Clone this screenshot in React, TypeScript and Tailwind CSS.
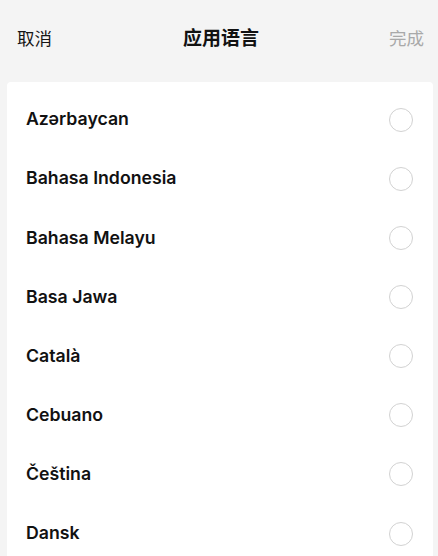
const languages = [
  "Azərbaycan",
  "Bahasa Indonesia",
  "Bahasa Melayu",
  "Basa Jawa",
  "Català",
  "Cebuano",
  "Čeština",
  "Dansk",
];

export default function App() {
  return (
    <div
      className="h-[556px] w-[438px] overflow-hidden bg-[#f4f4f4]"
      style={{ fontFamily: "Inter, 'Noto Sans CJK SC', sans-serif" }}
    >
      <header className="flex h-[79px] items-center justify-between pl-[17px] pr-[14px] pb-[1px]">
        <button type="button" className="text-[17.5px] text-[#161616]">
          取消
        </button>
        <h1 className="ml-[1px] text-[19px] font-bold text-[#111]">应用语言</h1>
        <button type="button" className="text-[17.5px] text-[#a9a9a9]">
          完成
        </button>
      </header>
      <div className="ml-[7px] mr-[5px] mt-[3px] rounded-[4px] bg-white pt-[8px]">
        {languages.map((lang) => (
          <div key={lang} className="flex h-[59.15px] items-center justify-between pl-[19px] pr-[20px]">
            <span className="text-[17.7px] font-semibold text-[#111]">{lang}</span>
            <span className="size-[24px] rounded-full border-[1.75px] border-[#d2d2d2]" />
          </div>
        ))}
      </div>
    </div>
  );
}
